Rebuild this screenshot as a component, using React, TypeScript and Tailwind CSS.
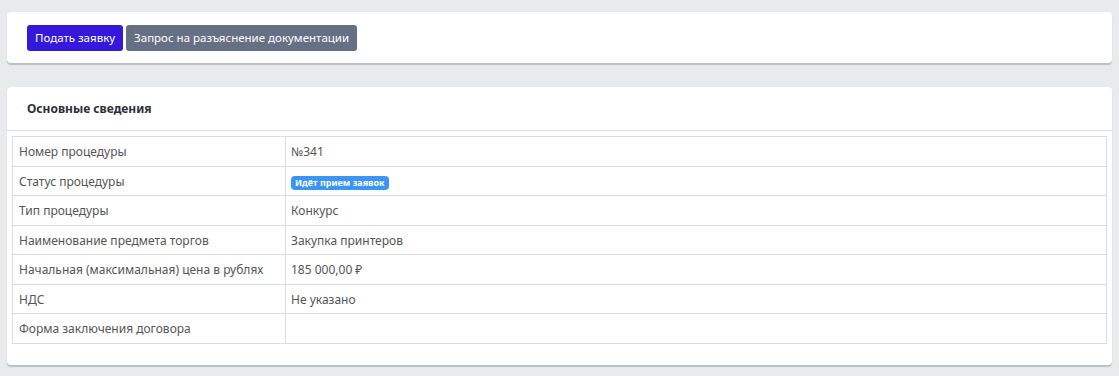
import React from "react";

const rows: { label: string; value: React.ReactNode }[] = [
  { label: "Номер процедуры", value: "№341" },
  {
    label: "Статус процедуры",
    value: (
      <span className="inline-block rounded-[4px] bg-[#3a95f4] px-[4px] py-[1px] text-[9px] font-bold leading-[12px] text-white">
        Идёт прием заявок
      </span>
    ),
  },
  { label: "Тип процедуры", value: "Конкурс" },
  { label: "Наименование предмета торгов", value: "Закупка принтеров" },
  { label: "Начальная (максимальная) цена в рублях", value: "185 000,00 ₽" },
  { label: "НДС", value: "Не указано" },
  { label: "Форма заключения договора", value: "" },
];

export default function App() {
  return (
    <div
      className="min-h-[376px] bg-[#e9eaec] px-[7px] pt-[12px] pb-[10px] text-[#555]"
      style={{ fontFamily: '"Noto Sans", "Open Sans", sans-serif' }}
    >
      <div className="flex h-[51px] items-center gap-[3px] rounded-[4px] bg-white px-[20px] shadow-[0_2px_1px_rgba(150,155,170,0.55)]">
        <button className="h-[26px] rounded-[3px] bg-[#3419dc] px-[8px] text-[11.5px] text-white">
          Подать заявку
        </button>
        <button className="h-[26px] rounded-[3px] bg-[#667084] px-[8px] text-[11.5px] text-white">
          Запрос на разъяснение документации
        </button>
      </div>

      <div className="mt-[24px] rounded-[4px] bg-white shadow-[0_2px_1px_rgba(150,155,170,0.55)]">
        <div className="flex h-[44px] items-center border-b border-[#dcdde1] px-[20px]">
          <h2 className="text-[12px] font-bold text-[#2b2f36]">Основные сведения</h2>
        </div>
        <div className="px-[5px] pt-[5px] pb-[21px]">
          <table className="w-full border-collapse text-[12px]">
            <tbody>
              {rows.map((r) => (
                <tr key={r.label} className="h-[29.5px]">
                  <td className="w-[273px] border border-[#dcdcdc] px-[6px] pt-[2px] align-middle">{r.label}</td>
                  <td className="border border-[#dcdcdc] px-[5px] pt-[2px] align-middle">{r.value}</td>
                </tr>
              ))}
            </tbody>
          </table>
        </div>
      </div>
    </div>
  );
}
